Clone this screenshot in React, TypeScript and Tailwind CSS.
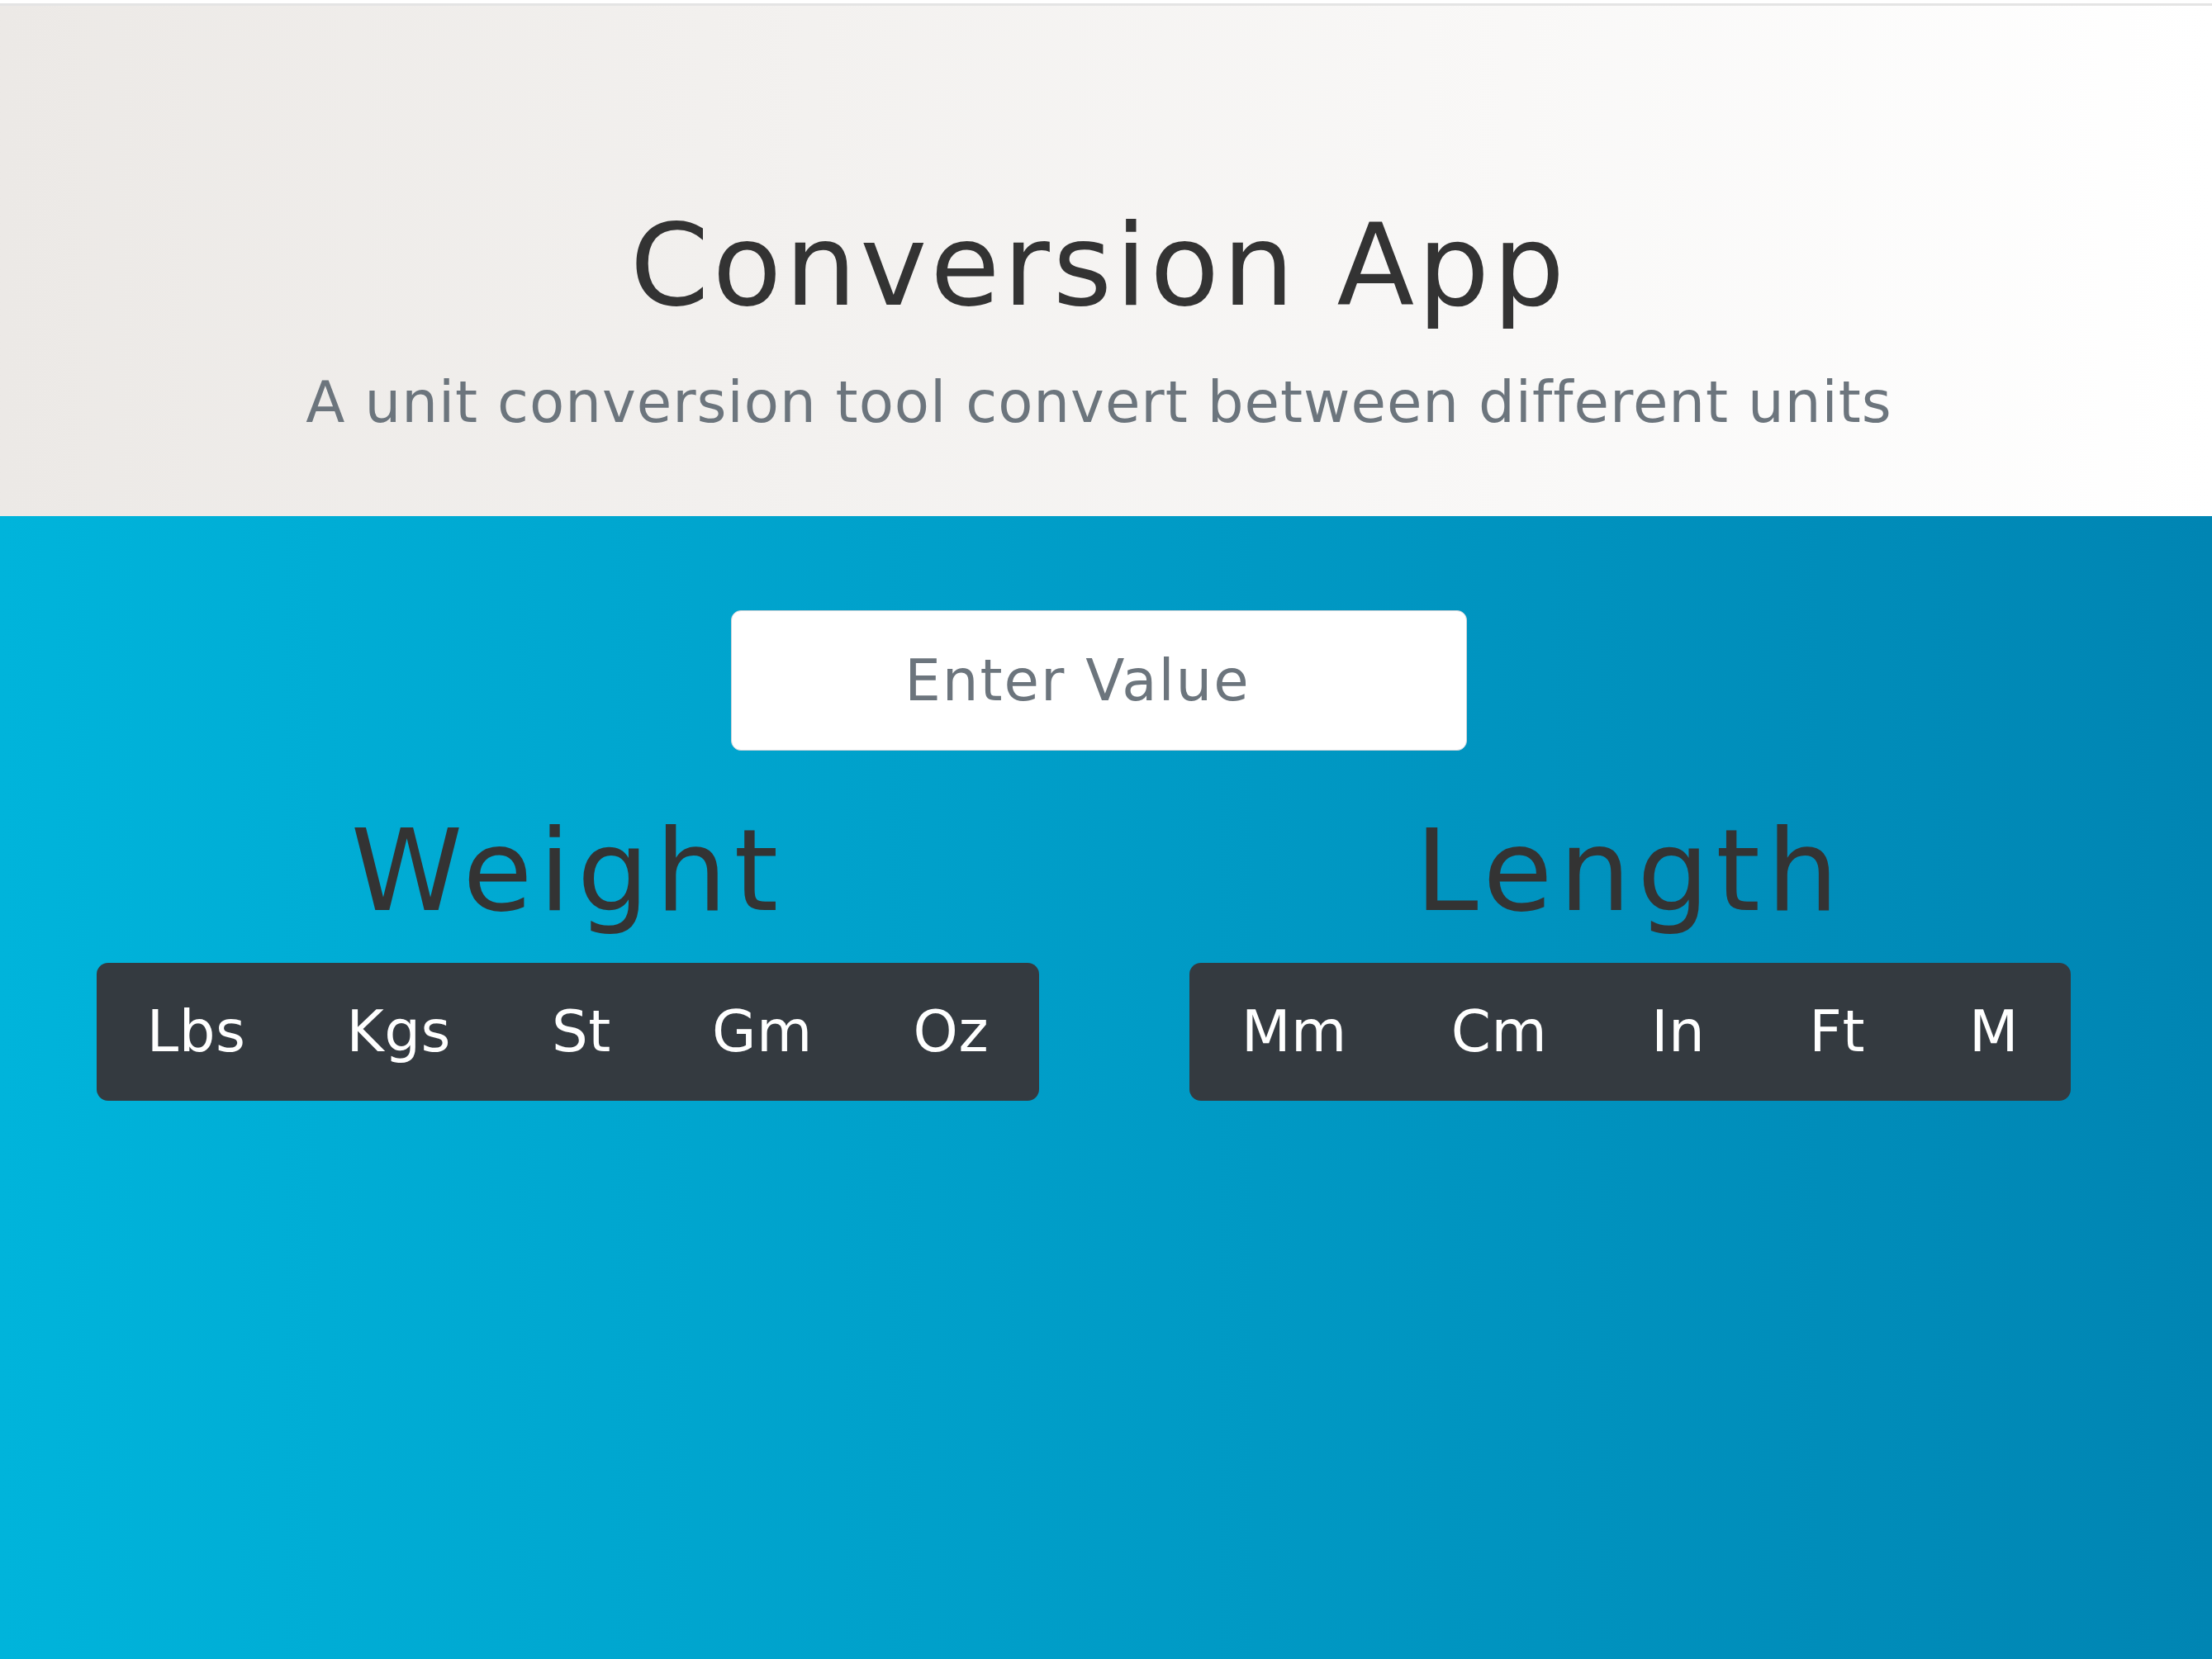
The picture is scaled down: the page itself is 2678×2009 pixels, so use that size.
import React from "react";

const weights = ["Lbs", "Kgs", "St", "Gm", "Oz"];
const lengths = ["Mm", "Cm", "In", "Ft", "M"];

function Group({ title, items, pad }: { title: string; items: string[]; pad: "w" | "l" }) {
  return (
    <div className="flex flex-col items-center">
      <h2 className="text-[137px] leading-[137px] font-normal tracking-[8px] text-[#333333] mt-[77px]">{title}</h2>
      <div className="mt-[43px] flex rounded-[14px] bg-[#343a40] h-[167px] items-center">
        {items.map((it) => (
          <button
            key={it}
            className={
              "h-full text-white text-[69px] leading-[69px] tracking-[0.5px] " +
              (pad === "w" ? "px-[61px]" : "px-[63px]")
            }
          >
            {it}
          </button>
        ))}
      </div>
    </div>
  );
}

export default function App() {
  return (
    <div className="min-h-[2009px] flex flex-col font-['DejaVu_Sans',sans-serif] bg-white">
      <div className="h-[4px] bg-white" />
      <div className="h-[3px] bg-[#e4e4e4]" />
      <header className="bg-linear-to-r from-[#ece9e6] to-[#ffffff] pr-[17px] pt-[246px] pb-[103px] flex flex-col items-center">
        <h1 className="text-[137px] leading-[137px] font-normal tracking-[4px] text-[#333333]">Conversion App</h1>
        <p className="mt-[63px] text-[69px] leading-[69px] tracking-[1px] text-[#6c757d]">
          A unit conversion tool convert between different units
        </p>
      </header>
      <main className="flex-1 bg-linear-to-r from-[#00b4db] to-[#0085b3] pr-[17px] pt-[114px]">
        <div className="flex justify-center">
          <input
            placeholder="Enter Value"
            className="w-[891px] h-[170px] rounded-[12px] bg-white border border-[#ced4da] pr-[52px] text-center text-[69px] tracking-[2px] text-[#495057] placeholder:text-[#6c757d] outline-none"
          />
        </div>
        <div className="mx-auto w-[2572px] grid grid-cols-2">
          <Group title="Weight" items={weights} pad="w" />
          <Group title="Length" items={lengths} pad="l" />
        </div>
      </main>
    </div>
  );
}
